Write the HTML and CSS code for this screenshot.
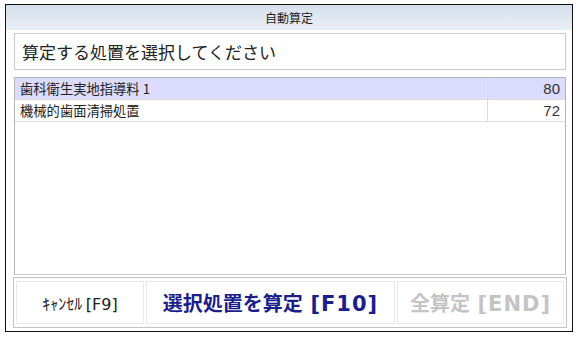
FILE: index.html
```html
<!DOCTYPE html>
<html lang="ja">
<head>
  <meta charset="UTF-8">
  <title>自動算定</title>
  <link rel="stylesheet" href="styles.css">
</head>
<body>
  <div class="window">
    <div class="titlebar">自動算定</div>
    <div class="prompt">算定する処置を選択してください</div>

    <div class="list">
      <div class="row selected">
        <span class="name">歯科衛生実地指導料 1</span>
        <span class="points">80</span>
      </div>
      <div class="row">
        <span class="name">機械的歯面清掃処置</span>
        <span class="points">72</span>
      </div>
    </div>

    <div class="buttons">
      <button class="btn cancel">ｷｬﾝｾﾙ <span class="key">[F9]</span></button>
      <button class="btn primary">選択処置を算定 <span class="key">[F10]</span></button>
      <button class="btn disabled">全算定 <span class="key">[END]</span></button>
    </div>
  </div>
</body>
</html>
```

FILE: styles.css
```css
body { margin: 0; background: #fff; font-family: "Noto Sans CJK JP", "Noto Sans", sans-serif; color: #222; }

.window {
  box-sizing: border-box;
  width: 568px; height: 328px;
  margin: 4px 0 0 5px;
  border: 1px solid #111;
  display: flex; flex-direction: column;
  padding: 0 6px 0 8px;
}
.titlebar {
  margin: 0 -6px 0 -8px;
  height: 25px; line-height: 25px;
  text-align: center; font-size: 12px;
  background: linear-gradient(#d5dfeb, #e9eff6);
}
.prompt {
  box-sizing: border-box;
  margin-top: 3px; height: 37px;
  border: 1px solid #c9c9c9;
  padding-left: 7px;
  font-size: 17px; line-height: 35px;
}
.list {
  box-sizing: border-box;
  margin-top: 7px; height: 198px;
  border: 1px solid #b4b4b4;
  border-bottom-color: #c8c8c8;
}
.row { display: flex; height: 21px; line-height: 21px; font-size: 13.3px; border-bottom: 1px solid #dcdcdc; }
.row.selected { background: #dcdcff; }
.name { flex: 1; padding-left: 5px; }
.points { width: 72px; padding-right: 5px; text-align: right; border-left: 1px solid #dcdcdc; font-family: "Liberation Sans", sans-serif; font-size: 15px; color: #333; }

.buttons {
  box-sizing: border-box;
  margin: 2px -1px 0 -1px; height: 51px;
  border: 1px solid #c4c4c4;
  padding: 3px 2px;
  display: flex; gap: 2px;
}
.btn {
  border: 1px solid #e8e8e8; background: #fff;
  font-family: inherit; padding: 0; white-space: nowrap;
}
.key { font-family: "DejaVu Sans", sans-serif; }
.cancel { width: 128px; font-size: 16px; color: #222; }
.primary { width: 249px; font-size: 20px; font-weight: bold; color: #1c1f8a; }
.primary .key, .disabled .key { font-size: 21px; letter-spacing: 1px; margin-left: 3px; }
.disabled { flex: 1; font-size: 20px; font-weight: bold; color: #c4c4c4; }
```
